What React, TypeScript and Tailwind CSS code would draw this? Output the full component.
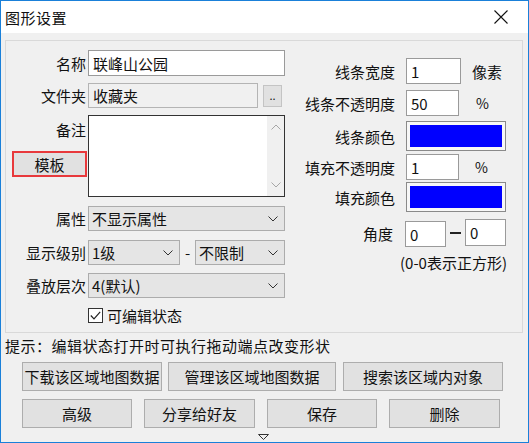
import React from 'react';

const font = { fontFamily: '"Noto Sans CJK SC", "Noto Sans", sans-serif' };

function Chevron() {
  return (
    <svg width="10" height="6" viewBox="0 0 10 6" className="shrink-0">
      <polyline points="0.5,0.5 5,5 9.5,0.5" fill="none" stroke="#333" strokeWidth="1" />
    </svg>
  );
}

function Select({ value, w }: { value: string; w: string }) {
  return (
    <div className={`${w} h-[25px] flex items-center justify-between bg-[#e5e5e5] border border-[#acacac] pl-[3px] pr-[6px]`}>
      <span className="leading-none">{value}</span>
      <Chevron />
    </div>
  );
}

function Field({ value, w, h = 'h-[26px]' }: { value: string; w: string; h?: string }) {
  return (
    <div className={`${w} ${h} flex items-center bg-white border border-[#9a9a9a] pl-[4px] leading-none`}>
      {value}
    </div>
  );
}

function ColorBox() {
  return (
    <div className="w-[100px] h-[30px] border border-[#8a8a8a] bg-[#f7f7f7] p-[3px]">
      <div className="w-full h-full bg-[#0000ff]" />
    </div>
  );
}

function Btn({ label, w }: { label: string; w: string }) {
  return (
    <div className={`${w} h-[29px] flex items-center justify-center bg-[#e1e1e1] border border-[#adadad] leading-none`}>
      {label}
    </div>
  );
}

export default function App() {
  return (
    <div
      className="w-[529px] h-[443px] border border-[#1a80d9] flex flex-col bg-[#f0f0f0] text-[15px] text-[#111] overflow-hidden"
      style={font}
    >
      {/* title bar */}
      <div className="h-[32px] bg-white flex items-center justify-between pl-[4px] pr-[20px]">
        <span className="leading-none text-[15px] tracking-[0.5px]">图形设置</span>
        <svg width="14" height="14" viewBox="0 0 14 14">
          <path d="M0.5 0.5 L13.5 13.5 M13.5 0.5 L0.5 13.5" stroke="#111" strokeWidth="1.1" fill="none" />
        </svg>
      </div>

      {/* group box */}
      <div className="ml-[4px] mt-[7px] w-[518px] h-[293px] border border-[#d9d9d9] flex">
        {/* left column */}
        <div className="flex flex-col pt-[9px]">
          <div className="flex items-center h-[26px]">
            <span className="w-[80px] text-right leading-none">名称</span>
            <div className="ml-[2px]"><Field value="联峰山公园" w="w-[197px]" /></div>
          </div>
          <div className="flex items-center h-[25px] mt-[7px]">
            <span className="w-[80px] text-right leading-none">文件夹</span>
            <div className="ml-[2px] w-[170px] h-[25px] flex items-center bg-[#f0f0f0] border border-[#b4b4b4] pl-[4px] leading-none">收藏夹</div>
            <div className="ml-[5px] w-[19px] h-[22px] flex items-end justify-center pb-[5px] bg-[#e1e1e1] border border-[#c4c4c4] text-[11px] leading-none">..</div>
          </div>
          <div className="flex h-[82px] mt-[7px]">
            <div className="w-[82px] flex flex-col items-end">
              <span className="mt-[7px] mr-[2px] leading-none">备注</span>
              <div className="mt-[14px] mr-[1px] w-[75px] h-[26px] border-2 border-[#e8393c] bg-[#e1e1e1] flex items-center justify-center leading-none">
                模板
              </div>
            </div>
            <div className="w-[197px] h-[82px] border border-[#333] bg-white flex justify-end">
              <div className="w-[17px] h-full bg-[#f0f0f0] flex flex-col items-center justify-between py-[8px]">
                <svg width="10" height="6" viewBox="0 0 10 6">
                  <polyline points="0.5,5.5 5,1 9.5,5.5" fill="none" stroke="#a6a6a6" strokeWidth="1" />
                </svg>
                <svg width="10" height="6" viewBox="0 0 10 6">
                  <polyline points="0.5,0.5 5,5 9.5,0.5" fill="none" stroke="#a6a6a6" strokeWidth="1" />
                </svg>
              </div>
            </div>
          </div>
          <div className="flex items-center h-[25px] mt-[9px]">
            <span className="w-[80px] text-right leading-none">属性</span>
            <div className="ml-[2px]"><Select value="不显示属性" w="w-[197px]" /></div>
          </div>
          <div className="flex items-center h-[25px] mt-[9px]">
            <span className="w-[80px] text-right leading-none">显示级别</span>
            <div className="ml-[2px]"><Select value="1级" w="w-[92px]" /></div>
            <span className="w-[15px] text-center leading-none">-</span>
            <Select value="不限制" w="w-[90px]" />
          </div>
          <div className="flex items-center h-[25px] mt-[8px]">
            <span className="w-[80px] text-right leading-none">叠放层次</span>
            <div className="ml-[2px]"><Select value="4(默认)" w="w-[197px]" /></div>
          </div>
          <div className="flex items-center h-[16px] mt-[9px] ml-[82px]">
            <div className="w-[15px] h-[15px] bg-white border border-[#333] flex items-center justify-center">
              <svg width="11" height="9" viewBox="0 0 11 9">
                <polyline points="0.8,4.5 4,7.8 10.2,0.8" fill="none" stroke="#222" strokeWidth="1.2" />
              </svg>
            </div>
            <span className="ml-[4px] leading-none">可编辑状态</span>
          </div>
        </div>

        {/* right column */}
        <div className="flex flex-col pt-[17px]">
          <div className="flex items-center h-[26px]">
            <span className="w-[110px] text-right leading-none">线条宽度</span>
            <div className="ml-[11px]"><Field value="1" w="w-[55px]" /></div>
            <span className="ml-[11px] leading-none">像素</span>
          </div>
          <div className="flex items-center h-[26px] mt-[6px]">
            <span className="w-[110px] text-right leading-none">线条不透明度</span>
            <div className="ml-[11px]"><Field value="50" w="w-[53px]" /></div>
            <span className="ml-[17px] leading-none text-[14px]">%</span>
          </div>
          <div className="flex items-center h-[30px] mt-[5px]">
            <span className="w-[110px] text-right leading-none">线条颜色</span>
            <div className="ml-[11px]"><ColorBox /></div>
          </div>
          <div className="flex items-center h-[26px] mt-[3px]">
            <span className="w-[110px] text-right leading-none">填充不透明度</span>
            <div className="ml-[11px]"><Field value="1" w="w-[53px]" /></div>
            <span className="ml-[16px] leading-none text-[14px]">%</span>
          </div>
          <div className="flex items-center h-[30px] mt-[2px]">
            <span className="w-[110px] text-right leading-none">填充颜色</span>
            <div className="ml-[11px]"><ColorBox /></div>
          </div>
          <div className="flex items-center h-[28px] mt-[7px]">
            <span className="w-[108px] text-right leading-none">角度</span>
            <div className="ml-[12px] self-end"><Field value="0" w="w-[41px]" /></div>
            <span className="w-[19px] flex justify-center">
              <span className="w-[11px] h-[2px] bg-[#222]" />
            </span>
            <div className="self-start"><Field value="0" w="w-[41px]" h="h-[27px]" /></div>
          </div>
          <div className="mt-[8px] w-[222px] text-right leading-none">(0-0表示正方形)</div>
        </div>
      </div>

      {/* hint */}
      <div className="h-[24px] flex items-center pl-[4px] leading-none tracking-[0.5px]">提示：编辑状态打开时可执行拖动端点改变形状</div>

      {/* buttons */}
      <div className="flex mt-[5px] pl-[21px]">
        <Btn label="下载该区域地图数据" w="w-[140px]" />
        <div className="ml-[6px]"><Btn label="管理该区域地图数据" w="w-[168px]" /></div>
        <div className="ml-[7px]"><Btn label="搜索该区域内对象" w="w-[160px]" /></div>
      </div>
      <div className="flex mt-[8px] pl-[21px] gap-[12px]">
        <Btn label="高级" w="w-[110px]" />
        <Btn label="分享给好友" w="w-[111px]" />
        <Btn label="保存" w="w-[110px]" />
        <Btn label="删除" w="w-[111px]" />
      </div>
      <div className="flex mt-[6px] pl-[257px]">
        <svg width="11" height="6" viewBox="0 0 11 6">
          <polygon points="0.5,0.5 10.5,0.5 5.5,5.5" fill="none" stroke="#333" strokeWidth="1" />
        </svg>
      </div>
    </div>
  );
}
